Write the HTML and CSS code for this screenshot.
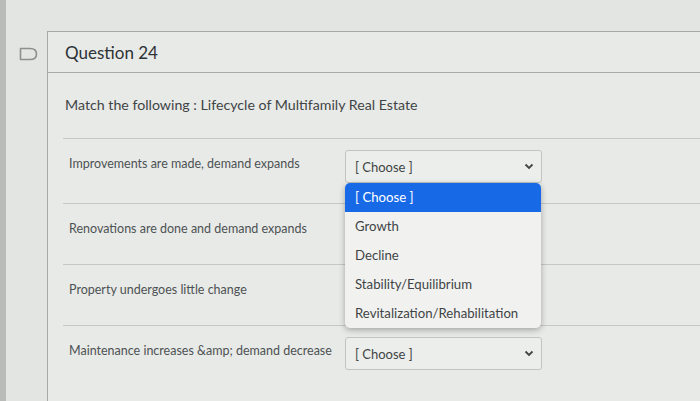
FILE: index.html
```html
<!DOCTYPE html>
<html lang="en">
<head>
    <meta charset="UTF-8">
    <title>Question 24</title>
    <link rel="stylesheet" href="styles.css">
</head>
<body>
    <div class="page">
        <div class="gutter">
            <svg class="flag" width="19" height="14" viewBox="0 0 19 14">
                <path d="M1.5 1.5 H11 Q17.5 1.5 17.5 7 Q17.5 12.5 11 12.5 H1.5 Z" fill="none" stroke="#8d918e" stroke-width="1.6" stroke-linejoin="round"/>
            </svg>
        </div>
        <div class="card">
            <div class="card-header">
                <h2>Question 24</h2>
            </div>
            <div class="card-body">
                <p class="prompt">Match the following : Lifecycle of Multifamily Real Estate</p>

                <div class="row first">
                    <span class="label">Improvements are made, demand expands</span>
                    <div class="select-wrap">
                        <div class="select">
                            <span>[ Choose ]</span>
                            <svg class="chevron" width="10" height="7" viewBox="0 0 10 7"><path d="M1.5 1.5 L5 5 L8.5 1.5" fill="none" stroke="#444" stroke-width="1.8"/></svg>
                        </div>
                        <ul class="menu">
                            <li class="active">[ Choose ]</li>
                            <li>Growth</li>
                            <li>Decline</li>
                            <li>Stability/Equilibrium</li>
                            <li>Revitalization/Rehabilitation</li>
                        </ul>
                    </div>
                </div>

                <div class="row">
                    <span class="label">Renovations are done and demand expands</span>
                </div>

                <div class="row">
                    <span class="label">Property undergoes little change</span>
                </div>

                <div class="row last">
                    <span class="label">Maintenance increases &amp;amp; demand decrease</span>
                    <div class="select-wrap">
                        <div class="select">
                            <span>[ Choose ]</span>
                            <svg class="chevron" width="10" height="7" viewBox="0 0 10 7"><path d="M1.5 1.5 L5 5 L8.5 1.5" fill="none" stroke="#444" stroke-width="1.8"/></svg>
                        </div>
                    </div>
                </div>
            </div>
        </div>
    </div>
</body>
</html>
```

FILE: styles.css
```css
body {
    font-family: Lato, "Open Sans", Arial, sans-serif;
    background-color: #e3e5e2;
    margin: 0;
    padding: 0;
    color: #454a4c;
}

.page {
    display: flex;
    height: 401px;
    padding-top: 31px;
    box-sizing: border-box;
    border-left: 6px solid #b9bbb8;
}

.gutter {
    width: 41px;
    padding-top: 14px;
    padding-left: 13px;
    box-sizing: border-box;
}

.card {
    flex: 1;
    border-left: 1px solid #a7a9a6;
    border-top: 1px solid #a7a9a6;
    background-color: #e8eae7;
}

.card-header {
    height: 40px;
    display: flex;
    align-items: center;
    padding-left: 17px;
    border-bottom: 1px solid #a9aba8;
}

.card-header h2 {
    margin: 0;
    font-size: 17px;
    font-weight: 400;
    color: #2d3236;
}

.card-body {
    padding-left: 15px;
}

.prompt {
    margin: 0;
    height: 65px;
    line-height: 64px;
    padding-left: 2px;
    font-size: 14.2px;
    color: #3f4446;
    border-bottom: 1px solid #c6c8c5;
}

.row {
    display: flex;
    height: 61px;
    padding-top: 11px;
    box-sizing: border-box;
    border-bottom: 1px solid #c6c8c5;
}

.row.first {
    height: 65px;
}

.row.last {
    border-bottom: none;
}

.label {
    width: 276px;
    padding-left: 6px;
    padding-top: 6px;
    font-size: 12.5px;
    color: #4d5254;
}

.select-wrap {
    position: relative;
    width: 197px;
}

.select {
    height: 33px;
    box-sizing: border-box;
    border: 1px solid #c2c4c1;
    border-radius: 3px;
    background-color: #eceeeb;
    display: flex;
    align-items: center;
    justify-content: space-between;
    padding: 0 7px 0 9px;
    font-size: 13px;
    color: #3f4446;
}

.menu {
    position: absolute;
    top: 33px;
    left: 0;
    width: 196px;
    margin: 0;
    padding: 0;
    list-style: none;
    background-color: #f1f2f0;
    border-radius: 5px;
    box-shadow: 0 2px 6px rgba(0, 0, 0, 0.3);
    overflow: hidden;
}

.menu li {
    height: 29px;
    line-height: 29px;
    padding-left: 10px;
    font-size: 13.2px;
    color: #3f4446;
}

.menu li.active {
    background-color: #1869e6;
    color: #ffffff;
}
```
